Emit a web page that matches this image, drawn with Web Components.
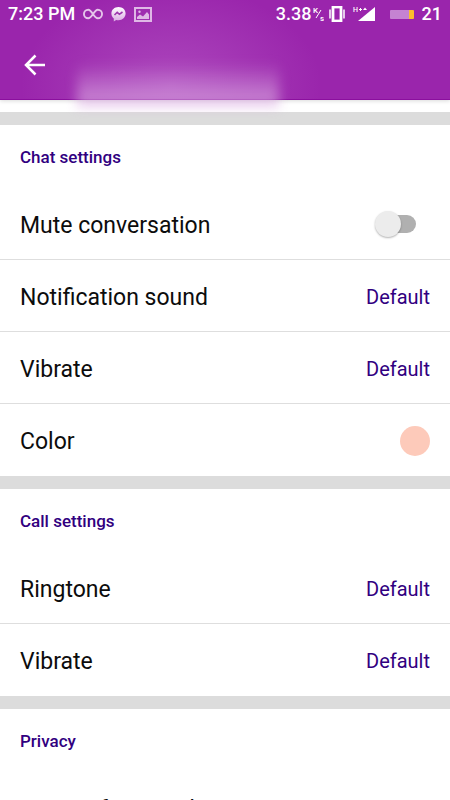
<!DOCTYPE html>
<html lang="en">
<head>
<meta charset="utf-8">
<meta name="viewport" content="width=device-width, initial-scale=1">
<title>Conversation settings</title>
<style>
    body {
        margin: 0;
        background: #fff;
        font-family: Roboto, "Liberation Sans", sans-serif;
    }
</style>
</head>
<body>
<settings-page></settings-page>

<script>
class StatusBar extends HTMLElement {

    connectedCallback() {
        this.attachShadow({ mode: 'open' });
        this.shadowRoot.innerHTML = `
            <style>
                :host{
                    display: flex;
                    justify-content: space-between;
                    align-items: center;
                    height: 28px;
                    padding: 0 8px;
                    color: #fff;
                    font-size: 18px;
                    font-weight: 500;
                    line-height: 28px;
                }
                .group{
                    display: flex;
                    align-items: center;
                }
                .left{ gap: 8px; }
                .right{ gap: 5px; }
                .speed{ display: flex; align-items: center; gap: 1px; }
                svg{ display: block; }
                .battery{
                    width: 24px;
                    height: 9px;
                    margin: 0 3px 0 10px;
                    border-radius: 1px;
                    background: linear-gradient(to right, #c583d2 19px, #fdbe2c 19px);
                }
            </style>
            <div class="group left">
                <span>7:23 PM</span>
                <svg width="20" height="12" viewBox="0 0 21 12" fill="none" stroke="#e5c5ea" stroke-width="2">
                    <path d="M10.500 6C8.500 3 7.500 1.500 5.500 1.500a4.500 4.500 0 0 0 0 9C7.500 10.500 8.500 9 10.500 6S13.500 1.500 15.500 1.500a4.500 4.500 0 0 1 0 9C13.500 10.500 12.500 9 10.500 6Z"/>
                </svg>
                <svg width="15" height="16" viewBox="0 0 15 16">
                    <defs>
                        <linearGradient id="fade" x1="0" y1="0" x2="0" y2="1">
                            <stop offset="0" stop-color="#fff"/>
                            <stop offset="1" stop-color="#d9a9e2"/>
                        </linearGradient>
                    </defs>
                    <path fill="url(#fade)" d="M7.500 1C3.400 1 .4 3.900.4 7.500c0 2 .9 3.800 2.400 5V15.500l2.400-1.600c.7.200 1.500.3 2.300.3 4.100 0 7.100-3 7.100-6.700S11.600 1 7.500 1Z"/>
                    <path d="M3.500 9 6.200 6.300 8.400 8.300 11.500 6" fill="none" stroke="#9c35ac" stroke-width="1.600"/>
                </svg>
                <svg width="18" height="15" viewBox="0 0 18 15">
                    <rect x="1" y="1" width="16" height="13" fill="none" stroke="#dfb8e6" stroke-width="2"/>
                    <circle cx="5.500" cy="4.800" r="1.200" fill="#dfb8e6"/>
                    <path fill="#dfb8e6" d="M3 12V10l3-2.500 3 2 4-4.500 2 2.500V12Z"/>
                </svg>
            </div>
            <div class="group right">
                <span class="speed">3.38
                    <svg width="11" height="16" viewBox="0 0 11 16" fill="#fff" font-size="8">
                        <text x="0" y="7">K</text>
                        <path d="M3 12 8 4" stroke="#fff" stroke-width="1"/>
                        <text x="7" y="15">s</text>
                    </svg>
                </span>
                <svg width="16" height="16" viewBox="0 0 16 16" fill="none" stroke="#fff">
                    <rect x="4" y="1" width="8" height="14" stroke-width="2.800"/>
                    <path d="M1 3.500V12.500M15 3.500V12.500" stroke-width="1.500"/>
                </svg>
                <svg width="25" height="16" viewBox="1 0 25 16" fill="#fff">
                    <path d="M9 15 26 1V15Z"/>
                    <text x="4" y="6" font-size="7">H</text>
                    <path d="M10 3.500H13M11.500 2V5" stroke="#fff" stroke-width="1"/>
                    <path d="M14 4 16 1.500 18 4Z"/>
                </svg>
                <span class="battery"></span>
                <span>21</span>
            </div>
        `;
    }
}
window.customElements.define('status-bar', StatusBar);

class AppHeader extends HTMLElement {

    connectedCallback() {
        this.attachShadow({ mode: 'open' });
        this.shadowRoot.innerHTML = `
            <style>
                :host{
                    display: block;
                    position: relative;
                    flex: none;
                    background: #9a25ac;
                    box-shadow: 0 1px 4px rgba(0, 0, 0, .15);
                }
                .bar{
                    position: relative;
                    z-index: 1;
                    display: flex;
                    align-items: center;
                    height: 72px;
                    padding: 2px 0 0 20px;
                    box-sizing: border-box;
                    border-bottom: 1px solid #8b0f9e;
                }
                button{
                    display: flex;
                    padding: 0;
                    border: 0;
                    background: none;
                    cursor: pointer;
                }
                status-bar{ position: relative; z-index: 1; }
                .haze{
                    position: absolute;
                    inset: 0;
                    background: radial-gradient(ellipse 150px 100px at 38% 85%, rgba(190, 105, 205, .5), rgba(190, 105, 205, 0));
                }
                .smudge{
                    position: absolute;
                    z-index: 1;
                    left: 17%;
                    right: 38%;
                    bottom: -7px;
                    height: 44px;
                    background: linear-gradient(to bottom, rgba(218, 170, 225, 0), rgba(218, 170, 225, .6) 75%);
                    filter: blur(6px);
                }
            </style>
            <div class="haze"></div>
            <status-bar></status-bar>
            <div class="bar">
                <button type="button" aria-label="Back">
                    <svg width="30" height="30" viewBox="0 0 30 30" fill="none" stroke="#fff" stroke-width="2.500">
                        <path d="M25 15H7M15.500 5.500 6 15 15.500 24.500"/>
                    </svg>
                </button>
            </div>
            <div class="smudge"></div>
        `;
    }
}
window.customElements.define('app-header', AppHeader);

class SettingsSection extends HTMLElement {

    connectedCallback() {
        this.attachShadow({ mode: 'open' });
        this.shadowRoot.innerHTML = `
            <style>
                :host{
                    display: block;
                    border-top: 13px solid #dcdcdc;
                }
                h2{
                    margin: 0;
                    padding: 2px 20px 0;
                    color: #31007f;
                    font-size: 17px;
                    font-weight: 500;
                    line-height: 61px;
                }
            </style>
            <h2>${this.getAttribute("heading")}</h2>
            <slot></slot>
        `;
    }
}
window.customElements.define('settings-section', SettingsSection);

class SettingsRow extends HTMLElement {

    connectedCallback() {
        this.attachShadow({ mode: 'open' });
        this.shadowRoot.innerHTML = `
            <style>
                :host{
                    display: block;
                    border-bottom: 1px solid #dedede;
                }
                :host(:last-child){
                    border-bottom-color: #fff;
                }
                button{
                    display: flex;
                    justify-content: space-between;
                    align-items: center;
                    box-sizing: border-box;
                    width: 100%;
                    height: 71px;
                    padding: 2px 20px 0;
                    border: 0;
                    background: none;
                    color: #0c0c0c;
                    font: inherit;
                    font-size: 23px;
                    text-align: left;
                    cursor: pointer;
                }
                .label{
                    padding-top: 2px;
                }
                .value{
                    color: #31007f;
                    font-size: 20px;
                }
            </style>
            <button type="button">
                <span class="label">${this.getAttribute("label")}</span>
                <span class="value"><slot></slot></span>
            </button>
        `;
    }
}
window.customElements.define('settings-row', SettingsRow);

class SwitchRow extends HTMLElement {

    connectedCallback() {
        this.attachShadow({ mode: 'open' });
        this.shadowRoot.innerHTML = `
            <style>
                :host{
                    display: block;
                    border-bottom: 1px solid #dedede;
                }
                label{
                    display: flex;
                    justify-content: space-between;
                    align-items: center;
                    height: 71px;
                    padding: 0 34px 0 20px;
                    color: #0c0c0c;
                    font-size: 23px;
                }
                .label{
                    padding-top: 4px;
                }
                input{
                    appearance: none;
                    display: flex;
                    align-items: center;
                    width: 38px;
                    height: 18px;
                    margin: 0;
                    border-radius: 9px;
                    background: #b0b0b0;
                }
                input::before{
                    content: "";
                    flex: none;
                    width: 26px;
                    height: 26px;
                    margin-left: -3px;
                    border-radius: 50%;
                    background: #ececec;
                    box-shadow: 0 1px 2px rgba(0, 0, 0, .3);
                }
                input:checked::before{
                    margin-left: 16px;
                }
            </style>
            <label>
                <span class="label">${this.getAttribute("label")}</span>
                <input type="checkbox" role="switch">
            </label>
        `;
    }
}
window.customElements.define('switch-row', SwitchRow);

class ColorDot extends HTMLElement {

    connectedCallback() {
        this.attachShadow({ mode: 'open' });
        this.shadowRoot.innerHTML = `
            <style>
                :host{
                    display: block;
                    width: 30px;
                    height: 30px;
                    border-radius: 50%;
                    background: #fdcaba;
                }
            </style>
        `;
    }
}
window.customElements.define('color-dot', ColorDot);

class SettingsPage extends HTMLElement {

    connectedCallback() {
        this.attachShadow({ mode: 'open' });
        this.shadowRoot.innerHTML = `
            <style>
                :host{
                    display: flex;
                    flex-direction: column;
                    height: 100vh;
                    overflow: hidden;
                }
                main{
                    flex: 1;
                    min-height: 0;
                    padding-top: 12px;
                    overflow-y: auto;
                    scrollbar-width: none;
                }
                app-header{ z-index: 1; }
            </style>
            <app-header></app-header>
            <main>
                <settings-section heading="Chat settings">
                    <switch-row label="Mute conversation"></switch-row>
                    <settings-row label="Notification sound">Default</settings-row>
                    <settings-row label="Vibrate">Default</settings-row>
                    <settings-row label="Color"><color-dot></color-dot></settings-row>
                </settings-section>
                <settings-section heading="Call settings">
                    <settings-row label="Ringtone">Default</settings-row>
                    <settings-row label="Vibrate">Default</settings-row>
                </settings-section>
                <settings-section heading="Privacy">
                    <settings-row label="View safety number"></settings-row>
                </settings-section>
            </main>
        `;
    }
}
window.customElements.define('settings-page', SettingsPage);
</script>
</body>
</html>
